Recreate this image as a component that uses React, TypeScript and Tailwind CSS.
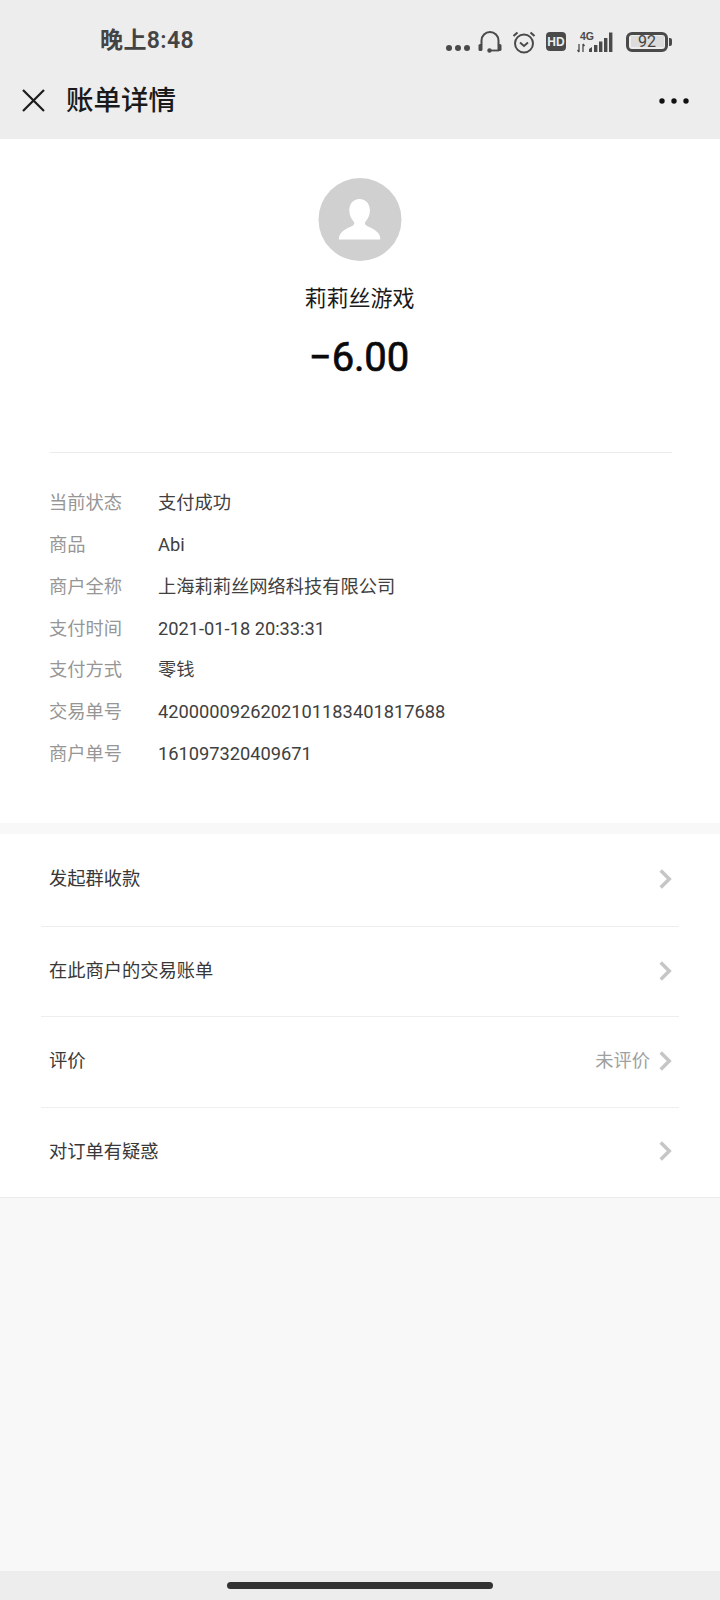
import { ChevronRight } from 'lucide-react';

const cjk = "font-['Roboto','Noto_Sans_CJK_SC',sans-serif]";

const details = [
  { label: '当前状态', value: '支付成功' },
  { label: '商品', value: 'Abi' },
  { label: '商户全称', value: '上海莉莉丝网络科技有限公司' },
  { label: '支付时间', value: '2021-01-18 20:33:31' },
  { label: '支付方式', value: '零钱' },
  { label: '交易单号', value: '4200000926202101183401817688' },
  { label: '商户单号', value: '161097320409671' },
];

const actions = [
  { label: '发起群收款' },
  { label: '在此商户的交易账单' },
  { label: '评价', note: '未评价' },
  { label: '对订单有疑惑' },
];

function StatusIcons() {
  return (
    <div className="flex items-center text-[#4a4a4a]">
      <svg width="24" height="6" viewBox="0 0 24 6" className="mt-[12px]" fill="currentColor">
        <circle cx="3" cy="3" r="3" />
        <circle cx="12" cy="3" r="3" />
        <circle cx="21" cy="3" r="3" />
      </svg>
      <svg width="24" height="22" viewBox="0 0 24 22" className="ml-[8px]" fill="none" stroke="currentColor">
        <path d="M3.500 14V9.500a8.500 8.500 0 0 1 17 0V14" strokeWidth="2" />
        <rect x="0.500" y="13" width="4" height="7" rx="1.600" fill="currentColor" stroke="none" />
        <rect x="19.500" y="13" width="4" height="7" rx="1.600" fill="currentColor" stroke="none" />
        <path d="M12 19.500h9" strokeWidth="1.800" />
        <circle cx="11.500" cy="19.500" r="2.200" fill="currentColor" stroke="none" />
      </svg>
      <svg width="24" height="24" viewBox="0 0 24 24" className="ml-[10px]" fill="none" stroke="currentColor">
        <circle cx="12" cy="13.500" r="9" strokeWidth="2" />
        <path d="M8 12.500l4 3.500 4-3.500" strokeWidth="1.900" />
        <path d="M1.500 6l4-3.500M22.500 6l-4-3.500" strokeWidth="2.200" />
      </svg>
      <div className="ml-[10px] flex h-[19px] w-[20px] items-center justify-center rounded-[4px] bg-[#4a4a4a] font-['Liberation_Sans',sans-serif] text-[12px] font-bold text-[#ededed]">
        HD
      </div>
      <svg width="39" height="22" viewBox="0 0 39 22" className="ml-[11px]" fill="currentColor">
        <text x="3" y="9" fontFamily="Liberation Sans, sans-serif" fontSize="10.500" fontWeight="700">4G</text>
        <path d="M2 13v8M0.500 19l1.500 2M6 13v8M6 13l1.500 2" stroke="currentColor" strokeWidth="1.300" fill="none" />
        <path d="M12 18l3-2v5h-3z" />
        <rect x="17" y="14" width="3.400" height="7" />
        <rect x="22" y="10.500" width="3.400" height="10.500" />
        <rect x="27" y="7" width="3.400" height="14" />
        <rect x="32" y="1.500" width="3.400" height="19.500" />
      </svg>
      <div className="ml-[10px] flex items-center">
        <div className="flex h-[20px] w-[42px] items-center rounded-[6px] border-[3px] border-[#4a4a4a] p-[1.500px]">
          <div className="flex h-full flex-1 items-center justify-center bg-[#dcdcdc] font-['Roboto',sans-serif] text-[16px] text-[#444]">
            92
          </div>
        </div>
        <div className="ml-[1px] h-[8px] w-[3px] rounded-r-[2px] bg-[#4a4a4a]" />
      </div>
    </div>
  );
}

function Header() {
  return (
    <header className="h-[139px] bg-[#ededed]">
      <div className="flex h-[80px] items-center justify-between pl-[100px] pr-[48px] pt-[3px]">
        <span className={`${cjk} text-[23px] font-semibold tracking-[0.4px] text-[#444]`}>晚上8:48</span>
        <StatusIcons />
      </div>
      <div className="flex items-center pl-[22px] pr-[31px]">
        <svg width="23" height="23" viewBox="0 0 23 23" fill="none" stroke="#1c1c1c" strokeWidth="2.200">
          <path d="M1 1l21 21M22 1L1 22" />
        </svg>
        <h1 className={`${cjk} ml-[21px] mt-[1px] text-[27.500px] font-medium leading-[40px] text-[#1a1a1a]`}>账单详情</h1>
        <svg width="30" height="6" viewBox="0 0 30 6" className="ml-auto" fill="#111">
          <circle cx="3" cy="3" r="2.700" />
          <circle cx="15" cy="3" r="2.700" />
          <circle cx="27" cy="3" r="2.700" />
        </svg>
      </div>
    </header>
  );
}

function Summary() {
  return (
    <section className="flex flex-col items-center pt-[39px]">
      <div className="flex h-[83px] w-[83px] -translate-x-[0.5px] items-center justify-center rounded-full bg-[#d0d0d0]">
        <svg width="42" height="42" viewBox="0 0 42 42" fill="#fff">
          <path d="M21 0c6.500 0 10.400 5 10.400 11.500c0 4.500-1.900 8.500-4.300 11c-1.200 1.300-.8 3.300 1 4.200c3.800 1.800 9.500 4 12.200 8.300c1.300 2.100 1.700 4 1.700 5.500H.2c0-1.500.4-3.400 1.700-5.500c2.700-4.300 8.400-6.500 12.200-8.300c1.800-.9 2.200-2.900 1-4.200c-2.400-2.500-4.300-6.500-4.300-11C10.800 5 14.500 0 21 0z" />
        </svg>
      </div>
      <div className={`${cjk} mt-[22px] -translate-x-[0.5px] text-[22px] leading-[32px] text-[#1a1a1a]`}>莉莉丝游戏</div>
      <div className="mt-[19px] -translate-x-[1px] font-['Roboto',sans-serif] text-[40px] font-normal leading-[48px] tracking-[-0.2px] text-[#0a0a0a] [-webkit-text-stroke:0.7px_#0a0a0a]">
        −6.00
      </div>
    </section>
  );
}

function Details() {
  return (
    <section className="ml-[50px] mr-[48px] mt-[70px] border-t border-[#ececec] pt-[29px] pb-[48px]">
      {details.map((row) => (
        <div key={row.label} className={`${cjk} -ml-[1px] flex h-[41.800px] items-center text-[18.250px]`}>
          <span className="w-[109px] text-[#969696]">{row.label}</span>
          <span className="text-[#404040]">{row.value}</span>
        </div>
      ))}
    </section>
  );
}

function Actions() {
  return (
    <section className="border-b border-[#ececec] bg-white">
      {actions.map((item) => (
        <div
          key={item.label}
          className="mx-[41px] flex h-[90.400px] items-center border-[#eeeeee] pb-[2px] pl-[8px] pr-[7px] first:h-[93.400px] last:h-[89.400px] [&:not(:last-child)]:border-b"
        >
          <span className={`${cjk} text-[18.250px] text-[#383838]`}>{item.label}</span>
          {item.note && <span className={`${cjk} ml-auto text-[18.250px] text-[#a0a0a0]`}>{item.note}</span>}
          <ChevronRight
            size={34}
            strokeWidth={2.500}
            strokeLinecap="butt"
            strokeLinejoin="miter"
            className={`${item.note ? '-ml-[2px]' : 'ml-auto'} -mr-[10px] text-[#c6c6c6]`}
          />
        </div>
      ))}
    </section>
  );
}

export default function App() {
  return (
    <div className="flex h-[1600px] w-[720px] flex-col overflow-hidden bg-[#f8f8f8]">
      <Header />
      <div className="bg-white">
        <Summary />
        <Details />
      </div>
      <div className="h-[11px] bg-[#f8f8f8]" />
      <Actions />
      <div className="flex-1" />
      <footer className="flex h-[29px] justify-center bg-[#ededed] pt-[11px]">
        <div className="h-[7px] w-[266px] rounded-full bg-[#333]" />
      </footer>
    </div>
  );
}
